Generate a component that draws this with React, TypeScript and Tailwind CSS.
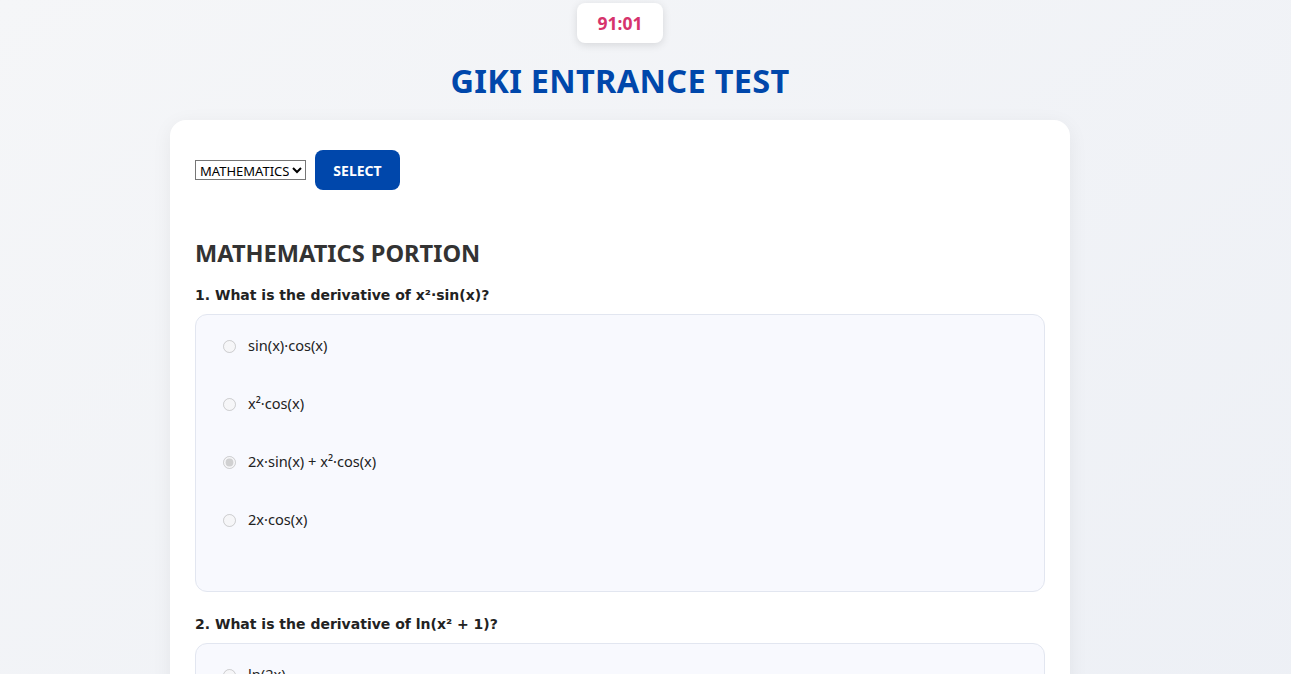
import { useState } from 'react'

const QUESTIONS = [
  {
    q: '1. What is the derivative of x²·sin(x)?',
    options: ['sin(x)·cos(x)', 'x²·cos(x)', '2x·sin(x) + x²·cos(x)', '2x·cos(x)'],
    answer: 2,
  },
  {
    q: '2. What is the derivative of ln(x² + 1)?',
    options: ['ln(2x)', '2x / (x² + 1)', '1 / (x² + 1)', '2 / x'],
    answer: -1,
  },
]

export default function App() {
  const [subject, setSubject] = useState('MATHEMATICS')

  return (
    <div className="min-h-screen bg-gradient-to-br from-[#f5f6f8] to-[#eceff5] font-['Noto_Sans','Open_Sans',sans-serif]">
      <div className="w-[1240px]">
        {/* Timer */}
        <div className="flex justify-center pt-[3px]">
          <div className="flex h-10 w-[86px] items-center justify-center rounded-lg bg-white text-[17.5px] font-bold text-[#d6336c] shadow-[0_2px_8px_rgba(0,0,0,0.12)]">
            91:01
          </div>
        </div>

        <h1 className="mt-[19px] text-center text-[32.5px] leading-[38px] font-bold tracking-[0.3px] text-[#0047ab]">
          GIKI ENTRANCE TEST
        </h1>

        {/* Card */}
        <div className="mx-auto mt-5 w-[900px] rounded-2xl bg-white px-[25px] pt-[30px] pb-10 shadow-[0_4px_20px_rgba(0,0,0,0.06)]">
          <div className="flex items-center gap-[9px]">
            <select
              value={subject}
              onChange={(e) => setSubject(e.target.value)}
              className="h-5 w-[111px] border border-[#767676] bg-white text-[13px] text-black font-['Noto_Sans',sans-serif]"
            >
              <option>MATHEMATICS</option>
              <option>PHYSICS</option>
              <option>ENGLISH</option>
            </select>
            <button className="h-10 w-[85px] rounded-lg bg-[#0047ab] text-[14px] font-bold text-white">
              SELECT
            </button>
          </div>

          <h2 className="mt-[49px] text-[23.6px] leading-[29px] font-bold text-[#333]">
            MATHEMATICS PORTION
          </h2>

          {QUESTIONS.map((item, qi) => (
            <div key={qi} className={qi === 0 ? 'mt-[18px]' : 'mt-[23px]'}>
              <p className="text-[14px] leading-[18px] font-bold text-[#222] font-['DejaVu_Sans',sans-serif]">
                {item.q}
              </p>
              <div className="mt-[10px] flex flex-col gap-[34px] rounded-xl border border-[#e2e6f0] bg-[#f8f9fe] pt-[19px] pb-[59px] pl-[27px]">
                {item.options.map((opt, oi) => (
                  <label key={oi} className="flex h-6 items-center gap-[12px] text-[14.6px] text-[#222]">
                    <input
                      type="radio"
                      name={`q${qi}`}
                      disabled
                      defaultChecked={oi === item.answer}
                      className="h-[13px] w-[13px]"
                    />
                    {opt}
                  </label>
                ))}
              </div>
            </div>
          ))}
        </div>
      </div>
    </div>
  )
}
